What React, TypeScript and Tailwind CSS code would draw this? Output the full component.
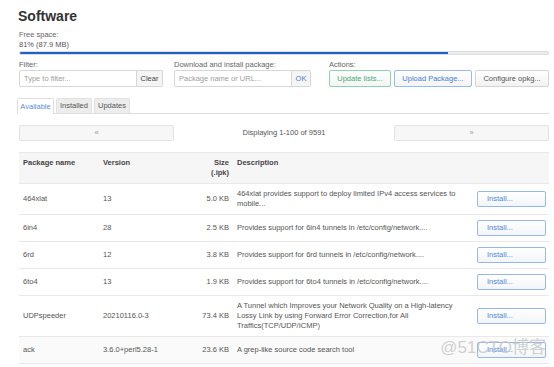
import React from "react";

type Pkg = {
    name: string
    version: string
    size: string
    desc: string
}

const packages: Pkg[] = [
    { name: "464xlat", version: "13", size: "5.0 KB", desc: "464xlat provides support to deploy limited IPv4 access services to mobile..." },
    { name: "6in4", version: "28", size: "2.5 KB", desc: "Provides support for 6in4 tunnels in /etc/config/network...." },
    { name: "6rd", version: "12", size: "3.8 KB", desc: "Provides support for 6rd tunnels in /etc/config/network...." },
    { name: "6to4", version: "13", size: "1.9 KB", desc: "Provides support for 6to4 tunnels in /etc/config/network...." },
    { name: "UDPspeeder", version: "20210116.0-3", size: "73.4 KB", desc: "A Tunnel which Improves your Network Quality on a High-latency Lossy Link by using Forward Error Correction,for All Traffics(TCP/UDP/ICMP)" },
    { name: "ack", version: "3.6.0+perl5.28-1", size: "23.6 KB", desc: "A grep-like source code search tool" },
]

const grid = "grid grid-cols-[80px_81px_53px_240px_1fr]"

export default function App() {
    return (
        <div className="relative w-[554px] h-[367px] overflow-hidden bg-white text-[7.5px] leading-[10px] text-[#555] pl-[19px] pr-[5px]" style={{ fontFamily: '"Liberation Sans", Arial, sans-serif' }}>
            <h1 className="text-[14px] leading-[16px] font-bold text-[#333] pt-[8px] -ml-px">Software</h1>

            <div className="mt-[6px] text-[#666]">Free space:</div>
            <div className="text-[#555]">81% (87.9 MB)</div>
            <div className="mt-[1px] h-[4px] rounded-full bg-[#ececec] border border-[#dcdcdc] overflow-hidden">
                <div className="h-full bg-[#1e63c4]" style={{ width: "81%" }} />
            </div>

            <div className="flex mt-[5px]">
                <div className="w-[155px]">
                    <div className="text-[#666]">Filter:</div>
                    <div className="flex h-[17px]">
                        <div className="w-[118px] border border-[#d6d6d6] rounded-l-[2px] flex items-center px-[4px] text-[#a0a0a0]">Type to filter...</div>
                        <div className="w-[26px] border border-l-0 border-[#d6d6d6] rounded-r-[2px] bg-[#f5f5f5] flex items-center justify-center text-[#444]">Clear</div>
                    </div>
                </div>
                <div className="w-[155px]">
                    <div className="text-[#666]">Download and install package:</div>
                    <div className="flex h-[17px]">
                        <div className="w-[118px] border border-[#d6d6d6] rounded-l-[2px] flex items-center px-[4px] text-[#a0a0a0]">Package name or URL...</div>
                        <div className="w-[19px] border border-l-0 border-[#d6d6d6] rounded-r-[2px] bg-[#f5f5f5] flex items-center justify-center text-[#4a7fcf]">OK</div>
                    </div>
                </div>
                <div className="flex-1">
                    <div className="text-[#666]">Actions:</div>
                    <div className="flex gap-[3px] h-[17px]">
                        <div className="w-[62px] border border-[#8ad6ab] rounded-[2px] bg-gradient-to-b from-white to-[#f4f4f4] flex items-center justify-center text-[#45ad74]">Update lists...</div>
                        <div className="w-[78px] border border-[#98bbec] rounded-[2px] bg-gradient-to-b from-white to-[#f4f4f4] flex items-center justify-center text-[#4680d3]">Upload Package...</div>
                        <div className="w-[74px] border border-[#d4d4d4] rounded-[2px] bg-gradient-to-b from-white to-[#f2f2f2] flex items-center justify-center text-[#555]">Configure opkg...</div>
                    </div>
                </div>
            </div>

            <div className="flex gap-[2px] mt-[11px] -ml-[2px] border-b border-[#dedede] h-[16px] items-end">
                <div className="h-[16px] w-[37px] border border-b-0 border-[#dedede] bg-white -mb-px flex items-center justify-center text-[#5a90da] rounded-t-[2px]">Available</div>
                <div className="h-[15px] w-[36px] bg-[#ededed] border border-b-0 border-[#e2e2e2] flex items-center justify-center text-[#555] rounded-t-[2px]">Installed</div>
                <div className="h-[15px] w-[36px] bg-[#ededed] border border-b-0 border-[#e2e2e2] flex items-center justify-center text-[#555] rounded-t-[2px]">Updates</div>
            </div>

            <div className="flex items-center mt-[11px] h-[16px]">
                <div className="w-[155px] h-full border border-[#e2e2e2] rounded-[2px] bg-[#f7f7f7] flex items-center justify-center text-[#999]">«</div>
                <div className="flex-1 text-center text-[#555]">Displaying 1-100 of 9591</div>
                <div className="w-[155px] h-full border border-[#e2e2e2] rounded-[2px] bg-[#f7f7f7] flex items-center justify-center text-[#999]">»</div>
            </div>

            <div className="mt-[11px]">
                <div className={`${grid} bg-[#f6f6f6] border-t border-b border-[#e8e8e8] py-[5px] font-bold text-[#444]`}>
                    <div className="px-[4px]">Package name</div>
                    <div className="px-[4px]">Version</div>
                    <div className="px-[4px] text-right">Size<br />(.ipk)</div>
                    <div className="px-[4px]">Description</div>
                    <div />
                </div>
                {packages.map((p, i) => (
                    <div key={i} className={`${grid} items-center border-b border-[#e8e8e8] py-[5px] ${i === 5 ? "bg-[#fafafa]" : "bg-white"}`}>
                        <div className="px-[4px]">{p.name}</div>
                        <div className="px-[4px]">{p.version}</div>
                        <div className="px-[4px] text-right">{p.size}</div>
                        <div className="px-[4px]">{p.desc}</div>
                        <div className="pl-[4px]">
                            <div className="w-[69px] h-[16px] border border-[#94b8e8] rounded-[2px] bg-gradient-to-b from-white to-[#f2f5f9] flex items-center pl-[9px] text-[#4f8ad9]">Install...</div>
                        </div>
                    </div>
                ))}
            </div>

            <div className="absolute right-[8px] bottom-[9px] text-[17px] leading-[20px] text-[#c4c4c4]/80 pointer-events-none" style={{ fontFamily: '"Liberation Sans", "Noto Sans CJK SC", sans-serif' }}>@51CTO博客</div>
        </div>
    )
}
